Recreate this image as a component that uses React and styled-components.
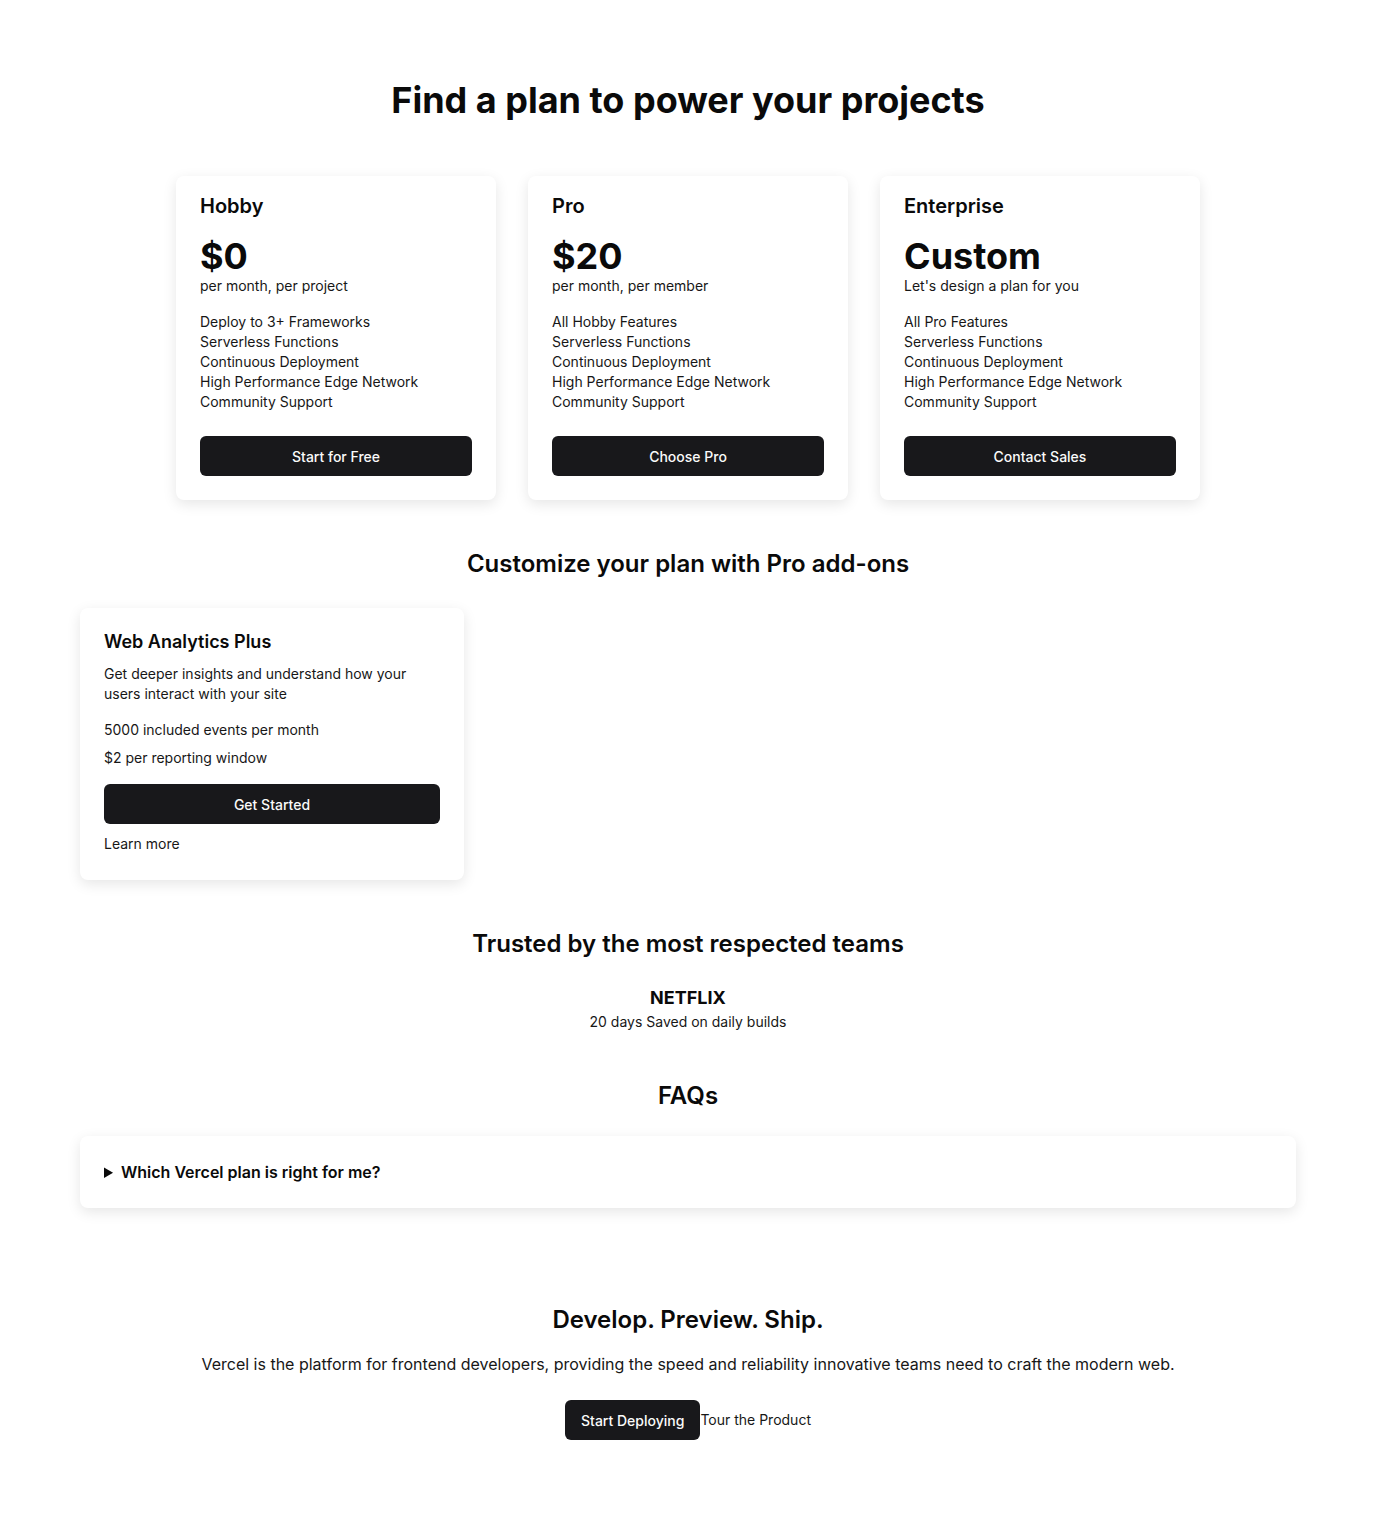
import React from "react";
import styled, { createGlobalStyle } from "styled-components";

const GlobalStyle = createGlobalStyle`
  * { box-sizing: border-box; }
  body {
    margin: 0;
    background: #ffffff;
    color: #0a0a0a;
    font-family: Inter, "Noto Sans", sans-serif;
  }
`;

const Page = styled.main`
  max-width: 1376px;
  margin: 0 auto;
  padding: 80px 80px 80px;
  display: flex;
  flex-direction: column;
  align-items: center;
`;

const Title = styled.h1`
  margin: 0 0 56px;
  font-size: 36px;
  line-height: 40px;
  font-weight: 700;
`;

const SectionTitle = styled.h2`
  margin: ${({ $top }) => $top || "0"} 0 ${({ $bottom }) => $bottom || "28px"};
  font-size: 24px;
  line-height: 32px;
  font-weight: 600;
  text-align: center;
`;

const PlanGrid = styled.div`
  display: grid;
  grid-template-columns: repeat(3, 320px);
  gap: 32px;
`;

const Card = styled.div`
  background: #fff;
  border-radius: 8px;
  box-shadow: 0 4px 14px rgba(0, 0, 0, 0.1);
  padding: 16px 24px 24px;
  display: flex;
  flex-direction: column;
`;

const PlanName = styled.h3`
  margin: 0;
  font-size: 20px;
  line-height: 28px;
  font-weight: 600;
`;

const Price = styled.div`
  margin-top: 16px;
  font-size: 36px;
  line-height: 40px;
  font-weight: 700;
`;

const Small = styled.div`
  font-size: 14px;
  line-height: 20px;
  color: #171717;
`;

const Features = styled.ul`
  list-style: none;
  margin: 16px 0 24px;
  padding: 0;
  font-size: 14px;
  line-height: 20px;
  color: #171717;
`;

const Button = styled.button`
  height: 40px;
  width: ${({ $full }) => ($full ? "100%" : "auto")};
  padding: 0 16px;
  border: none;
  border-radius: 6px;
  background: #18181b;
  color: #fafafa;
  font-family: inherit;
  font-size: 14px;
  font-weight: 500;
  cursor: pointer;
`;

const AddOnRow = styled.div`
  align-self: stretch;
  display: flex;
`;

const AddOnCard = styled(Card)`
  width: 384px;
  padding: 20px 24px 26px;
`;

const AddOnName = styled.h3`
  margin: 0 0 8px;
  font-size: 18px;
  line-height: 28px;
  font-weight: 600;
`;

const Para = styled.p`
  margin: ${({ $m }) => $m || "0"};
  font-size: 14px;
  line-height: 20px;
  color: #171717;
`;

const Link = styled.a`
  margin-top: ${({ $flat }) => ($flat ? "0" : "10px")};
  font-size: 14px;
  line-height: 20px;
  color: #171717;
  text-decoration: none;
`;

const Testimonial = styled.div`
  display: flex;
  flex-direction: column;
  align-items: center;
  margin-bottom: 48px;
`;

const Brand = styled.div`
  font-size: 18px;
  line-height: 28px;
  font-weight: 700;
`;

const Faq = styled.details`
  align-self: stretch;
  background: #fff;
  border-radius: 8px;
  box-shadow: 0 4px 14px rgba(0, 0, 0, 0.1);
  padding: 24px;
  margin-bottom: 96px;
`;

const Question = styled.summary`
  font-size: 16px;
  line-height: 24px;
  font-weight: 600;
  cursor: pointer;
`;

const Cta = styled.section`
  display: flex;
  flex-direction: column;
  align-items: center;
`;

const Lead = styled.p`
  margin: 0 0 24px;
  font-size: 16px;
  line-height: 24px;
  color: #171717;
`;

const Actions = styled.div`
  display: flex;
  align-items: center;
`;

const plans = [
  {
    name: "Hobby",
    price: "$0",
    note: "per month, per project",
    features: ["Deploy to 3+ Frameworks", "Serverless Functions", "Continuous Deployment", "High Performance Edge Network", "Community Support"],
    cta: "Start for Free",
  },
  {
    name: "Pro",
    price: "$20",
    note: "per month, per member",
    features: ["All Hobby Features", "Serverless Functions", "Continuous Deployment", "High Performance Edge Network", "Community Support"],
    cta: "Choose Pro",
  },
  {
    name: "Enterprise",
    price: "Custom",
    note: "Let's design a plan for you",
    features: ["All Pro Features", "Serverless Functions", "Continuous Deployment", "High Performance Edge Network", "Community Support"],
    cta: "Contact Sales",
  },
];

export default function App() {
  return (
    <>
      <GlobalStyle />
      <Page>
        <Title>Find a plan to power your projects</Title>
        <PlanGrid>
          {plans.map((p) => (
            <Card key={p.name}>
              <PlanName>{p.name}</PlanName>
              <Price>{p.price}</Price>
              <Small>{p.note}</Small>
              <Features>
                {p.features.map((f) => (
                  <li key={f}>{f}</li>
                ))}
              </Features>
              <Button $full>{p.cta}</Button>
            </Card>
          ))}
        </PlanGrid>

        <SectionTitle $top="48px">Customize your plan with Pro add-ons</SectionTitle>
        <AddOnRow>
          <AddOnCard>
            <AddOnName>Web Analytics Plus</AddOnName>
            <Para>Get deeper insights and understand how your users interact with your site</Para>
            <Para $m="16px 0 8px">5000 included events per month</Para>
            <Para $m="0 0 16px">$2 per reporting window</Para>
            <Button $full>Get Started</Button>
            <Link href="#">Learn more</Link>
          </AddOnCard>
        </AddOnRow>

        <SectionTitle $top="48px" $bottom="24px">Trusted by the most respected teams</SectionTitle>
        <Testimonial>
          <Brand>NETFLIX</Brand>
          <Small>20 days Saved on daily builds</Small>
        </Testimonial>

        <SectionTitle $bottom="24px">FAQs</SectionTitle>
        <Faq>
          <Question>Which Vercel plan is right for me?</Question>
        </Faq>

        <Cta>
          <SectionTitle $bottom="16px">Develop. Preview. Ship.</SectionTitle>
          <Lead>Vercel is the platform for frontend developers, providing the speed and reliability innovative teams need to craft the modern web.</Lead>
          <Actions>
            <Button>Start Deploying</Button>
            <Link as="span" $flat>Tour the Product</Link>
          </Actions>
        </Cta>
      </Page>
    </>
  );
}
